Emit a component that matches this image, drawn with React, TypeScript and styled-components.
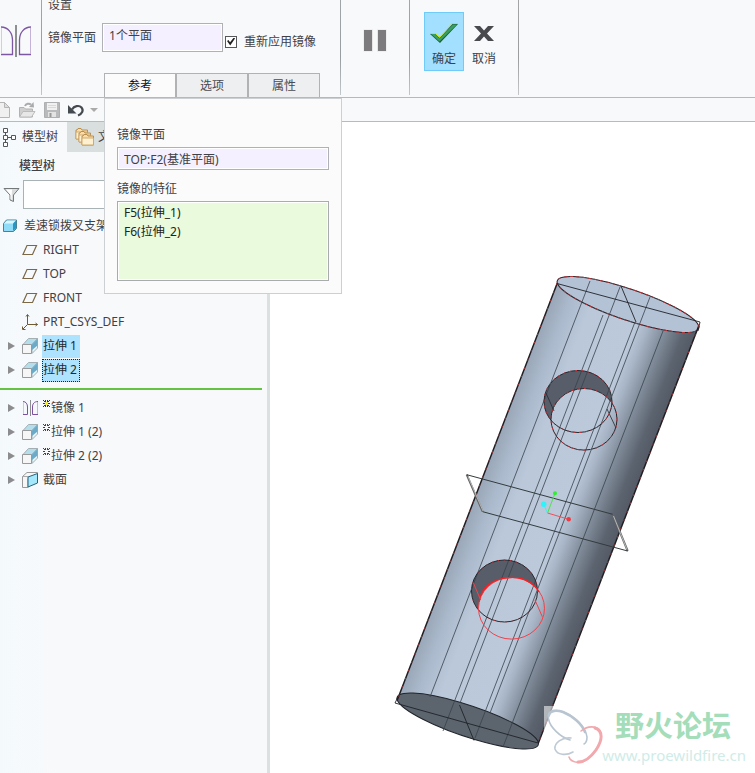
import React from "react";
import styled, { createGlobalStyle, css } from "styled-components";

const GlobalStyle = createGlobalStyle`
  *, *::before, *::after { box-sizing: border-box; }
  body {
    margin: 0;
    background: #f8f9fb;
    color: #3f4146;
    font: 12px/16px "Noto Sans", "Noto Sans CJK SC", sans-serif;
  }
  button, input { font: inherit; color: inherit; }
  button { padding: 0; border: 0; background: none; }
  svg { display: block; flex: none; }
`;

const Page = styled.div`
  display: flex;
  flex-direction: column;
  height: 100vh;
  overflow: hidden;
`;

/* Ribbon */

const Ribbon = styled.header`
  display: flex;
  flex: none;
  height: 98px;
  border-bottom: 1px solid #b4babb;
`;

const RibbonGroup = styled.div<{ $width: number }>`
  display: flex;
  flex: none;
  width: ${(p) => p.$width}px;
`;

const FeatureBadge = styled(RibbonGroup)`
  padding-top: 25px;
`;

const Separator = styled.div`
  flex: none;
  width: 1px;
  margin-bottom: 2px;
  background: linear-gradient(#a3a6a8, #9a9d9f 60%, #c3c7ca);
`;

const Settings = styled.section`
  display: flex;
  flex-direction: column;
  flex: none;
  width: 298px;
`;

const SettingsTitle = styled.h2`
  margin: 0 0 13px 6px;
  font-size: 12px;
  font-weight: 400;
  line-height: 10px;
`;

const SettingsRow = styled.div`
  display: flex;
  align-items: center;
  padding-left: 6px;
`;

const PlaneInput = styled.input`
  width: 121px;
  height: 29px;
  margin: 0 2px 0 6px;
  padding: 0 6px 6px;
  border: 1px solid #b0b1b4;
  outline: 0;
  background: #f4f0ff;
  box-shadow: inset 0 0 0 1px #fff;
`;

const CheckLabel = styled.label`
  display: flex;
  align-items: center;
  gap: 7px;
  padding-top: 8px;
`;

const CheckBox = styled.input`
  appearance: none;
  display: grid;
  place-items: center;
  width: 12px;
  height: 12px;
  margin: 0;
  border: 1px solid #55585a;
  background: #fff;
  &:checked::before {
    content: "";
    width: 8px;
    height: 8px;
    background: #222;
    clip-path: polygon(0 45%, 18% 32%, 38% 60%, 85% 0, 100% 12%, 40% 100%);
  }
`;

const Tabs = styled.div`
  position: relative;
  display: flex;
  margin: auto 0 0 62px;
`;

const Tab = styled.button<{ $active?: boolean }>`
  width: 72px;
  height: 24px;
  border: 1px solid #b1b2b4;
  border-bottom: 0;
  background: ${(p) => (p.$active ? "#fbfbfc" : "#eeeff1")};
  color: ${(p) => (p.$active ? "#111" : "#4a4b50")};
`;

const Popup = styled.div`
  position: absolute;
  z-index: 2;
  top: calc(100% + 1px);
  left: 0;
  display: flex;
  flex-direction: column;
  gap: 11px;
  width: 238px;
  padding: 28px 12px 12px;
  border: 1px solid #ccd0d2;
  background: #fbfbfb;
`;

const Field = styled.div`
  display: flex;
  flex-direction: column;
  gap: 4px;
`;

const ReferenceInput = styled.input`
  width: 100%;
  height: 23px;
  padding: 0 6px;
  border: 1px solid #b0b1b4;
  outline: 0;
  background: #f4f0ff;
  box-shadow: inset 0 0 0 1px #fff;
`;

const FeatureList = styled.ul`
  height: 80px;
  margin: 0;
  padding: 1px 6px;
  border: 1px solid #a9abae;
  background: #e9fbdc;
  box-shadow: inset 0 0 0 1px #fff;
  color: #222;
  line-height: 19px;
  list-style: none;
`;

const PauseGroup = styled(RibbonGroup)`
  align-items: flex-start;
  justify-content: center;
  padding-top: 29px;
`;

const ActionGroup = styled(RibbonGroup)`
  align-items: flex-start;
  padding: 12px 0 0 14px;
`;

const ActionButton = styled.button<{ $primary?: boolean }>`
  display: flex;
  flex-direction: column;
  align-items: center;
  justify-content: flex-start;
  gap: 7px;
  width: 40px;
  height: 59px;
  padding-top: 9px;
  border: 1px solid transparent;
  ${(p) =>
    p.$primary &&
    css`
      border-color: #6fcbfa;
      background: #a3e0ff;
    `}
`;

/* Quick access bar */

const QuickBar = styled.nav`
  display: flex;
  flex: none;
  align-items: center;
  gap: 8px;
  height: 24px;
  border-bottom: 1px solid #b4bcbd;
`;

const MenuArrow = styled.span`
  border: 4px solid transparent;
  border-top-color: #aaa;
  border-bottom: 0;
`;

const UndoGroup = styled.div`
  display: flex;
  align-items: center;
  gap: 5px;
`;

/* Work area */

const WorkArea = styled.div`
  display: flex;
  flex: 1;
  min-height: 0;
`;

const Sidebar = styled.aside`
  flex: none;
  width: 270px;
  overflow: hidden;
  border-right: 3px solid #dbe0e1;
  background: linear-gradient(90deg, #f4fafc, #f8f9fb 60px);
`;

const SideTabs = styled.div`
  display: flex;
  height: 30px;
`;

const SideTab = styled.button<{ $active?: boolean }>`
  display: flex;
  align-items: center;
  gap: ${(p) => (p.$active ? 6 : 3)}px;
  padding: 0 ${(p) => (p.$active ? 9 : 8)}px 0 ${(p) => (p.$active ? 1 : 8)}px;
  background: ${(p) => (p.$active ? "transparent" : "#d9dfdf")};
`;

const SideTitle = styled.h2`
  margin: 6px 0 6px 19px;
  font-size: 12px;
  font-weight: 500;
  line-height: 16px;
`;

const FilterRow = styled.div`
  display: flex;
  align-items: center;
  gap: 3px;
  padding: 0 8px 0 3px;
`;

const FilterInput = styled.input`
  flex: 1;
  min-width: 0;
  height: 29px;
  border: 1px solid #a9b3b6;
  outline: 0;
  background: #fff;
`;

const Tree = styled.ul`
  margin: 5px 0 0;
  padding: 0;
  list-style: none;
`;

const TreeRow = styled.li<{ $root?: boolean }>`
  display: flex;
  align-items: center;
  gap: ${(p) => (p.$root ? 6 : 3)}px;
  height: 24px;
  padding-left: ${(p) => (p.$root ? 2 : 8)}px;
  white-space: nowrap;
`;

const Twisty = styled.span<{ $shown?: boolean }>`
  flex: none;
  width: 11px;
  &::before {
    content: "";
    display: block;
    width: 0;
    border: 4px solid transparent;
    border-left: 7px solid ${(p) => (p.$shown ? "#8c8c8e" : "transparent")};
    border-right: 0;
  }
`;

const RowLabel = styled.span<{ $selected?: boolean; $focused?: boolean }>`
  height: 23px;
  padding: 0 1px;
  line-height: 22px;
  ${(p) =>
    p.$selected &&
    css`
      padding-right: 3px;
      background: #aee3ff;
      color: #24272c;
    `}
  ${(p) =>
    p.$focused &&
    css`
      outline: 1px dotted #222;
      outline-offset: -1px;
    `}
`;

const NewMark = styled.span`
  display: inline-block;
  vertical-align: 4px;
`;

const InsertLine = styled.li`
  height: 2px;
  margin: 6px 5px 6px 0;
  background: #65c243;
`;

const Canvas = styled.main`
  position: relative;
  flex: 1;
  min-width: 0;
  background: #fff;
`;

const Scene = styled.svg`
  width: 100%;
  height: 100%;
`;

const Watermark = styled.div`
  position: absolute;
  right: 9px;
  bottom: 7px;
  display: flex;
  flex-direction: column;
  align-items: flex-end;
`;

const WatermarkName = styled.strong`
  margin-right: 15px;
  color: #a3ddb9;
  font: 700 29px/42px "Noto Sans CJK SC", sans-serif;
`;

const WatermarkLink = styled.a`
  color: #cfece8;
  font: 15px/21px "Noto Sans", sans-serif;
  text-decoration: none;
`;

/* Icons */

const MirrorIcon = () => (
  <svg width="32" height="32" fill="none">
    <path d="M1 2C8 2 12.500 8 12.500 15V29.500H1" stroke="#7d57a3" strokeWidth="1.300" />
    <path d="M1.500 3V29" stroke="#d8c9e6" />
    <path d="M16 0V32" stroke="#8d8f91" strokeWidth="2" />
    <path d="M31 2C24 2 19.500 8 19.500 15V29.500H31" stroke="#7d57a3" strokeWidth="1.300" />
    <path d="M30.500 3V29" stroke="#c5b2d8" />
  </svg>
);

const SmallMirrorIcon = () => (
  <svg width="17" height="16" fill="none">
    <path d="M1 1.500C4 1.500 5.500 4 5.500 7V14.500H1" stroke="#7c519f" />
    <path d="M1.500 2V14" stroke="#d5c4e4" />
    <path d="M8.500 0V16" stroke="#8d8f91" />
    <path d="M16 1.500C12 1.500 10.500 4 10.500 7V14.500H16" stroke="#7c519f" />
    <path d="M15.500 2V14" stroke="#c9b5dc" />
  </svg>
);

const PauseIcon = () => (
  <svg width="24" height="23">
    <path d="M.5.500H10V22.500H.5ZM14 .5H23.500V22.500H14Z" fill="#e7e5e5" />
    <path d="M1 1H9V22H1ZM15 1H23V22H15Z" fill="#7d7b7d" />
  </svg>
);

const CheckIcon = () => (
  <svg width="30" height="22">
    <path d="M1 12H7L11 15.500L23.500 2H29L11 21Z" fill="#1f5d3b" />
    <path d="M2 12H6.500L10.500 16.500L24 2.500H28L10.500 19.500Z" fill="#37a062" />
    <path d="M1 11.500H6.500L10.500 15.500L23 1.500H29" fill="none" stroke="#c5e423" />
  </svg>
);

const CrossIcon = () => (
  <svg width="22" height="22">
    <path d="M1 4H7L11 8.500L15 4H21L14 11.500L21 19H15L11 14.500L7 19H1L8 11.500Z" fill="#484a4e" />
  </svg>
);

const NewIcon = () => (
  <svg width="11" height="16">
    <path d="M0 .5H4.500L9.500 5.500V15.500H0" fill="#f0f0f0" stroke="#b5b5b5" />
    <path d="M4.500 .5V5.500H9.500Z" fill="#ddd" stroke="#b5b5b5" />
  </svg>
);

const OpenIcon = () => (
  <svg width="17" height="16">
    <path d="M.5 15V5.500H5L6.500 7H13.500V15Z" fill="#cfcfcf" stroke="#b2b2b2" />
    <path d="M.5 15L4 9.500H16L12.500 15Z" fill="#e7e7e7" stroke="#bbb" />
    <path d="M6 4C7 1.500 10 1 12 2.500" fill="none" stroke="#aaa" strokeWidth="2" />
    <path d="M10 5L15 5.500L14.500 0Z" fill="#aaa" />
  </svg>
);

const SaveIcon = () => (
  <svg width="16" height="16">
    <path d="M.5.500H15.500V15.500H.5Z" fill="#b9babb" stroke="#adafb0" />
    <path d="M3 1H13V8H3Z" fill="#f1f1f1" />
    <path d="M4 3.500H12M4 5.500H12" stroke="#d9d9d9" />
    <path d="M4 10H12V15H4Z" fill="#e3e3e3" />
    <path d="M5.500 11H7.500V15H5.500Z" fill="#999" />
  </svg>
);

const UndoIcon = () => (
  <svg width="17" height="14">
    <path d="M4 6.500C6 3 11 1.800 13.500 4.500C16 7.500 14 11 10 12.500" fill="none" stroke="#454a50" strokeWidth="2.200" />
    <path d="M0 2V10.500H8.500Z" fill="#454a50" />
  </svg>
);

const TreeIcon = () => (
  <svg width="15" height="20" fill="none" stroke="#54575b">
    <path d="M2.500 1.500H6.500V5.500H2.500ZM2.500 8.500H6.500V12.500H2.500ZM2.500 15.500H6.500V19.500H2.500ZM10.500 8.500H14.500V12.500H10.500Z" fill="#fff" />
    <path d="M4.500 5.500V8.500M4.500 12.500V15.500M6.500 10.500H10.500" />
  </svg>
);

const FoldersIcon = () => (
  <svg width="20" height="19" stroke="#b98e4e">
    {[0, 3, 6].map((n) => (
      <g key={n} transform={`translate(${n} ${n})`}>
        <path d="M1 11V2H2L3 .5H6L7 2H12.500V11Z" fill="#f8dda8" />
        <path d="M1 11V4H12.500V11Z" fill="#fff0d2" stroke="#d0aa6c" />
      </g>
    ))}
  </svg>
);

const FilterIcon = () => (
  <svg width="17" height="16">
    <path d="M1 1.500H16L10.500 8V14.500L7 13V8Z" fill="#d9dbdc" stroke="#75787b" />
    <path d="M3 2.500H9L8.500 13L7.500 12V8Z" fill="#fff" />
  </svg>
);

const PartIcon = () => (
  <svg width="15" height="14" strokeLinejoin="round">
    <path d="M1.500 4.500L4.500 1H14.500V9.500L11.500 12.500H1.500Z" fill="#8fdcf8" stroke="#4a7f98" />
    <path d="M2 4.500L5 1.500H14L11 4.500Z" fill="#d9f7ff" />
    <path d="M11 4.500L14 1.500V9.500L11 12Z" fill="#2499c5" />
  </svg>
);

const PlaneIcon = () => (
  <svg width="17" height="16">
    <path d="M5 3.500H14.500L10.500 12.500H1Z" fill="none" stroke="#7b6847" strokeWidth="1.200" />
  </svg>
);

const AxesIcon = () => (
  <svg width="17" height="16" fill="none" stroke="#6f5a32">
    <path d="M5.500 1V10.500H15.500M5.500 10.500L1 15M4 2.500L5.500 .5L7 2.500M13.500 9L15.500 10.500L13.500 12M.5 12.500V15.500H3.500" />
  </svg>
);

const ExtrudeIcon = () => (
  <svg width="17" height="16" strokeLinejoin="round">
    <path d="M6.500 .5H15.500L10 6.500H1Z" fill="#b5deed" stroke="#a3afb3" />
    <path d="M15.500 .5V10L10 15.500V6.500Z" fill="#e3f6fc" stroke="#a3afb3" />
    <path d="M15.500 1V7.500L10 12V6.500Z" fill="#6daac7" />
    <path d="M.5 6.500H9.500V15.500H.5Z" fill="#f6f6f6" stroke="#989a9b" />
  </svg>
);

const SectionIcon = () => (
  <svg width="17" height="16" strokeLinejoin="round">
    <path d="M.5 4.500L5 .5H15.500V3L6 6.500V15.500H.5Z" fill="#f6f6f6" stroke="#999" />
    <path d="M.5 4.500H6" stroke="#aaa" />
    <path d="M6 5L15.500 1.500V11L6 15Z" fill="#a5e7fb" stroke="#27627a" />
  </svg>
);

const Spark = ({ color, core }: { color: string; core: string }) => (
  <NewMark>
    <svg width="8" height="8" fill={color} shapeRendering="crispEdges">
      <path d="M0 0h1v1H0ZM2 0h1v2H2ZM4 0h1v2H4ZM6 0h1v1H6ZM1 1h1v1H1ZM5 1h1v1H5ZM0 3h2v1H0ZM5 3h2v1H5ZM1 5h1v1H1ZM5 5h1v1H5ZM0 6h1v1H0ZM2 5h1v2H2ZM4 5h1v2H4ZM6 6h1v1H6Z" />
      <path d="M2 2h3v3H2Z" fill={core} />
    </svg>
  </NewMark>
);

/* Tree data */

type Row = {
  label: string;
  icon: React.ReactNode;
  root?: boolean;
  expandable?: boolean;
  selected?: boolean;
  focused?: boolean;
  mark?: React.ReactNode;
};

const modelRows: Row[] = [
  { label: "差速锁拨叉支架.PRT", icon: <PartIcon />, root: true },
  { label: "RIGHT", icon: <PlaneIcon /> },
  { label: "TOP", icon: <PlaneIcon /> },
  { label: "FRONT", icon: <PlaneIcon /> },
  { label: "PRT_CSYS_DEF", icon: <AxesIcon /> },
  { label: "拉伸 1", icon: <ExtrudeIcon />, expandable: true, selected: true },
  { label: "拉伸 2", icon: <ExtrudeIcon />, expandable: true, selected: true, focused: true },
];

const pendingRows: Row[] = [
  { label: "镜像 1", icon: <SmallMirrorIcon />, expandable: true, mark: <Spark color="#333" core="#f5ec1c" /> },
  { label: "拉伸 1 (2)", icon: <ExtrudeIcon />, expandable: true, mark: <Spark color="#1d469c" core="#f8f9fb" /> },
  { label: "拉伸 2 (2)", icon: <ExtrudeIcon />, expandable: true, mark: <Spark color="#1d469c" core="#f8f9fb" /> },
  { label: "截面", icon: <SectionIcon />, expandable: true },
];

const TreeItem = ({ row }: { row: Row }) => (
  <TreeRow $root={row.root}>
    {!row.root && <Twisty $shown={row.expandable} />}
    {row.icon}
    <RowLabel $selected={row.selected} $focused={row.focused}>
      {row.mark}
      {row.label}
    </RowLabel>
  </TreeRow>
);

/* 3D model */

const axisLines = [
  [590, 281],
  [603, 315],
  [620, 287],
  [635, 322],
  [650, 297],
  [663, 331],
];

const Model = () => (
  <Scene viewBox="270 122 485 651" preserveAspectRatio="xMinYMin meet" role="img" aria-label="差速锁拨叉支架">
    <defs>
      <linearGradient id="steel" gradientUnits="userSpaceOnUse" x1="557" y1="283" x2="694.500" y2="336">
        <stop offset="0" stopColor="#98a6b7" />
        <stop offset=".12" stopColor="#aab9cb" />
        <stop offset=".27" stopColor="#bac8da" />
        <stop offset=".6" stopColor="#bbc9db" />
        <stop offset=".68" stopColor="#a8b5c6" />
        <stop offset=".8" stopColor="#808b99" />
        <stop offset=".92" stopColor="#5c6470" />
        <stop offset="1" stopColor="#545b66" />
      </linearGradient>
      <linearGradient id="cap" gradientUnits="userSpaceOnUse" x1="557" y1="290" x2="698" y2="320">
        <stop offset="0" stopColor="#b4c2d5" />
        <stop offset=".3" stopColor="#bbc9db" />
        <stop offset=".68" stopColor="#b8c6d8" />
        <stop offset=".85" stopColor="#8d99a8" />
        <stop offset="1" stopColor="#5f6773" />
      </linearGradient>
    </defs>

    <path d="M557.300 283L397.300 700L538 743L698.700 326Z" fill="url(#steel)" />
    <circle r="1" transform="matrix(70.500 21 7 18.500 628 304.500)" fill="url(#cap)" />
    <circle r="1" transform="matrix(70.500 21 7 18.500 467.700 721)" fill="#5c646e" />

    <g fill="none" stroke="#20242a">
      <circle r="1" transform="matrix(70.500 21 7 18.500 628 304.500)" vectorEffect="non-scaling-stroke" />
      <circle r="1" transform="matrix(70.500 21 7 18.500 467.700 721)" vectorEffect="non-scaling-stroke" />
    </g>
    <g fill="none" stroke="#b3383c" strokeDasharray="3 3">
      <circle r="1" transform="matrix(70.500 21 7 18.500 628 304.500)" vectorEffect="non-scaling-stroke" />
    </g>
    <path d="M557.300 283L397.300 700M698.700 326L538.400 743" stroke="#1e1d22" strokeWidth="1.500" />
    <path d="M557.300 283L397.300 700M698.700 326L538.400 743" stroke="#9b3539" strokeDasharray="2 7" />

    <ellipse cx="578" cy="401.500" rx="34" ry="31" fill="#575e69" />
    <ellipse cx="584" cy="419.300" rx="33" ry="30.800" fill="url(#steel)" />
    <ellipse cx="504.500" cy="591" rx="33" ry="31" fill="#575e69" />
    <ellipse cx="511.500" cy="608.300" rx="33" ry="30.800" fill="url(#steel)" />

    <g stroke="#39424b" strokeWidth=".8">
      {axisLines.map(([x, y]) => (
        <path key={x} d={`M${x} ${y}l-160 416`} />
      ))}
    </g>

    <g fill="none" stroke="#25282e">
      <ellipse cx="578" cy="401.500" rx="34" ry="31" />
      <ellipse cx="584" cy="419.300" rx="33" ry="30.800" />
      <ellipse cx="504.500" cy="591" rx="33" ry="31" />
      <path d="M546 393L554 411M607 409L616 428" strokeWidth=".8" />
    </g>
    <g fill="none" stroke="#d2343a" strokeDasharray="2 4">
      <ellipse cx="578" cy="401.500" rx="34" ry="31" />
      <ellipse cx="584" cy="419.300" rx="33" ry="30.800" />
      <ellipse cx="504.500" cy="591" rx="33" ry="31" strokeDasharray="1 5" />
    </g>
    <g fill="none" stroke="#f24148">
      <ellipse cx="511.500" cy="608.300" rx="33" ry="30.800" />
      <path d="M479 602C481 586 494 578 511 577.500C524 577 535 584 539 592" stroke="#ff1d20" strokeWidth="1.300" />
      <path d="M473.300 582.700L480.700 600M535 600L542.300 616.700" />
    </g>

    <g fill="none" stroke="#1f2328" strokeWidth=".9">
      <path d="M557 283.500L700 322L698 331M621 286L636 322" />
      <path d="M538 743L395 703L398 697M459.500 705L474 740.500" />
    </g>

    <g fill="none">
      <path d="M466.700 474.700L482.700 511.700M612.700 514.300L627.700 551" stroke="#666" strokeWidth="2" />
      <path d="M468 476.500L483 511M613.500 516L627 549.500" stroke="#c7c9ca" strokeWidth=".8" />
      <path d="M466.700 474.700L612.700 514.300M482.700 511.700L627.700 551" stroke="#333b3d" />
    </g>

    <path d="M547.500 513L555 493.300" stroke="#4de24c" />
    <path d="M547.500 513L543.700 504.300" stroke="#4be9ee" />
    <path d="M547.500 513L568.700 519.300" stroke="#ef5158" />
    <circle cx="555" cy="493.300" r="2" fill="#2ff02f" />
    <circle cx="543.700" cy="504.300" r="2.700" fill="#2df3fb" />
    <circle cx="568.700" cy="519.300" r="2.200" fill="#f5373e" />

    <path d="M544 706H602V765H544Z" fill="#fff" opacity=".55" />
    <g fill="none" strokeLinecap="round">
      <path d="M570 740C560 737 550 727 548.500 719C547 711 554 709 562 711.500C574 715 586 728 587 737C587 741 586 743 584 744" stroke="#b8c5d1" strokeWidth="1.600" />
      <path d="M549 715C550 710 557 710 563 712C573 716 582 724 585 732" stroke="#b8c5d1" strokeWidth="2.600" />
      <path d="M571 738C562 737 554 743 555 749C557 755 566 756 573 752" stroke="#bfcad5" strokeWidth="1.600" />
      <path d="M581 731C586 727 592 726 597 728C603 731 602 740 597 748C592 757 584 763 578 762.500C573 762 570 760 569 757" stroke="#f2a9ad" strokeWidth="1.600" />
      <path d="M595 728C604 731 602 741 596 750C591 757 584 762 578 762" stroke="#f2a9ad" strokeWidth="3" />
    </g>
  </Scene>
);

export default function App() {
  return (
    <>
      <GlobalStyle />
      <Page>
        <Ribbon>
          <FeatureBadge $width={41}>
            <MirrorIcon />
          </FeatureBadge>
          <Separator />
          <Settings>
            <SettingsTitle>设置</SettingsTitle>
            <SettingsRow>
              <label htmlFor="plane">镜像平面</label>
              <PlaneInput id="plane" defaultValue="1个平面" />
              <CheckLabel>
                <CheckBox type="checkbox" defaultChecked />
                重新应用镜像
              </CheckLabel>
            </SettingsRow>
            <Tabs>
              <Tab $active>参考</Tab>
              <Tab>选项</Tab>
              <Tab>属性</Tab>
              <Popup>
                <Field>
                  <label htmlFor="reference">镜像平面</label>
                  <ReferenceInput id="reference" defaultValue="TOP:F2(基准平面)" />
                </Field>
                <Field>
                  <span id="features">镜像的特征</span>
                  <FeatureList aria-labelledby="features">
                    <li>F5(拉伸_1)</li>
                    <li>F6(拉伸_2)</li>
                  </FeatureList>
                </Field>
              </Popup>
            </Tabs>
          </Settings>
          <Separator />
          <PauseGroup $width={68}>
            <button aria-label="暂停">
              <PauseIcon />
            </button>
          </PauseGroup>
          <Separator />
          <ActionGroup $width={108}>
            <ActionButton $primary>
              <CheckIcon />
              确定
            </ActionButton>
            <ActionButton>
              <CrossIcon />
              取消
            </ActionButton>
          </ActionGroup>
          <Separator />
        </Ribbon>

        <QuickBar>
          <button aria-label="新建">
            <NewIcon />
          </button>
          <button aria-label="打开">
            <OpenIcon />
          </button>
          <button aria-label="保存">
            <SaveIcon />
          </button>
          <UndoGroup>
            <button aria-label="撤消">
              <UndoIcon />
            </button>
            <MenuArrow />
          </UndoGroup>
        </QuickBar>

        <WorkArea>
          <Sidebar>
            <SideTabs>
              <SideTab $active>
                <TreeIcon />
                模型树
              </SideTab>
              <SideTab>
                <FoldersIcon />
                文件
              </SideTab>
            </SideTabs>
            <SideTitle>模型树</SideTitle>
            <FilterRow>
              <FilterIcon />
              <FilterInput aria-label="过滤" />
            </FilterRow>
            <Tree>
              {modelRows.map((row) => (
                <TreeItem key={row.label} row={row} />
              ))}
              <InsertLine />
              {pendingRows.map((row) => (
                <TreeItem key={row.label} row={row} />
              ))}
            </Tree>
          </Sidebar>
          <Canvas>
            <Model />
            <Watermark>
              <WatermarkName>野火论坛</WatermarkName>
              <WatermarkLink href="#">www.proewildfire.cn</WatermarkLink>
            </Watermark>
          </Canvas>
        </WorkArea>
      </Page>
    </>
  );
}
